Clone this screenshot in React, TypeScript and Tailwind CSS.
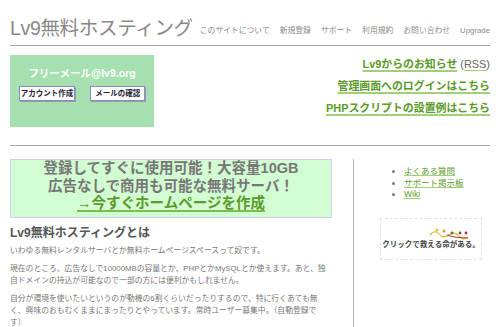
import React from "react";

const green = "text-[#5b9a2a]";

export default function App() {
  return (
    <div className="w-[503px] h-[327px] overflow-hidden bg-white font-['Liberation_Sans','Noto_Sans_CJK_JP',sans-serif] text-[#777]">
      <div className="pl-[10px] pr-[13px]">
        {/* header */}
        <div className="flex items-end justify-between pt-[15px] pb-[4px] border-b border-[#aaa]">
          <div className="text-[19.6px] leading-[26px] text-[#888] tracking-[-0.4px]">Lv9無料ホスティング</div>
          <nav className="flex gap-[10px] text-[7.8px] leading-[12px] text-[#888] pb-[4px]">
            <span>このサイトについて</span>
            <span>新規登録</span>
            <span>サポート</span>
            <span>利用規約</span>
            <span>お問い合わせ</span>
            <span>Upgrade</span>
          </nav>
        </div>

        {/* top area */}
        <div className="flex justify-between pt-[9px] pb-[18px] border-b border-[#aaa]">
          <div className="w-[144px] h-[72px] bg-[#a6e0b0] flex flex-col items-center pt-[11px]">
            <div className="text-white font-bold text-[10.5px] leading-[14px]">フリーメール@lv9.org</div>
            <div className="flex gap-[15px] mt-[6px]">
              <span className="bg-white border border-[#8a8ac8] text-[#223] font-bold text-[7.5px] leading-[13px] px-[1px] shadow-[1px_1px_0_#99a]">アカウント作成</span>
              <span className="bg-white border border-[#8a8ac8] text-[#223] font-bold text-[7.5px] leading-[13px] px-[4px] shadow-[1px_1px_0_#99a]">メールの確認</span>
            </div>
          </div>
          <div className="flex flex-col items-end pt-[1px] gap-[6px] text-[10.9px] leading-[16px] font-bold">
            <div>
              <span className={`${green} underline decoration-[#9fd07a] decoration-2 underline-offset-2`}>Lv9からのお知らせ</span>{" "}
              <span className="font-normal text-[#666]">(<span className="underline decoration-[#9fd07a] underline-offset-2">RSS</span>)</span>
            </div>
            <span className={`${green} underline decoration-[#9fd07a] decoration-2 underline-offset-2`}>管理画面へのログインはこちら</span>
            <span className={`${green} underline decoration-[#9fd07a] decoration-2 underline-offset-2`}>PHPスクリプトの設置例はこちら</span>
          </div>
        </div>

        {/* main */}
        <div className="flex pt-[13px]">
          <div className="w-[322px]">
            <div className="bg-[#d2fcd2] border border-[#ccd0f8] h-[59px] flex flex-col items-center text-[14.5px] leading-[17.5px] font-bold text-[#777]">
              <div>登録してすぐに使用可能！大容量10GB</div>
              <div>広告なしで商用も可能な無料サーバ！</div>
              <div className={`${green} underline decoration-[#7cbc4a] decoration-2 underline-offset-2`}>→今すぐホームページを作成</div>
            </div>
            <h2 className="mt-[7px] text-[12px] leading-[16px] font-bold text-[#555]">Lv9無料ホスティングとは</h2>
            <p className="mt-[4px] text-[7.8px] leading-[12px]">いわゆる無料レンタルサーバとか無料ホームページスペースって奴です。</p>
            <p className="mt-[6px] text-[7.8px] leading-[12px]">
              現在のところ、広告なしで10000MBの容量とか、PHPとかMySQLとか使えます。あと、独<br />
              自ドメインの持込が可能なので一部の方には便利かもしれません。
            </p>
            <p className="mt-[6px] text-[7.8px] leading-[12px]">
              自分が環境を使いたいというのが動機の6割くらいだったりするので、特に行くあても無<br />
              く、興味のおもむくままにまったりとやっています。常時ユーザー募集中。（自動登録で<br />
              す）
            </p>
          </div>
          <div className="ml-[21px] border-l border-[#b8b8c8] h-[200px] flex-1 pl-[26px]">
            <ul className="list-disc pl-[24px] pt-[7px] text-[8.5px] leading-[11.5px] marker:text-[#777]">
              <li><span className={`${green} underline decoration-[#9fd07a]`}>よくある質問</span></li>
              <li><span className={`${green} underline decoration-[#9fd07a]`}>サポート掲示板</span></li>
              <li><span className={`${green} underline decoration-[#9fd07a]`}>Wiki</span></li>
            </ul>
            <div className="mt-[17px] w-[102px] h-[42px] border border-dashed border-[#e2e2e2] flex flex-col items-center pt-[8px]">
              <svg width="40" height="14" viewBox="0 0 40 14" className="ml-[36px]">
                <path d="M1 8 Q6 2 10 7 T20 8 T30 9 T39 10" stroke="#e0b030" strokeWidth="1.2" fill="none" />
                <path d="M18 8 Q26 11 39 11" stroke="#b04040" strokeWidth="1.2" fill="none" />
                <circle cx="8" cy="3" r="1.5" fill="#e8c030" />
                <circle cx="15" cy="4" r="1.5" fill="#e09830" />
                <circle cx="23" cy="6" r="1.4" fill="#607030" />
                <circle cx="31" cy="6" r="1.4" fill="#805030" />
                <circle cx="37" cy="6" r="1.4" fill="#b03030" />
              </svg>
              <div className="text-[7.5px] leading-[10px] font-bold text-[#444] -mt-[1px]">クリックで救える命がある。</div>
            </div>
          </div>
        </div>
      </div>
    </div>
  );
}
